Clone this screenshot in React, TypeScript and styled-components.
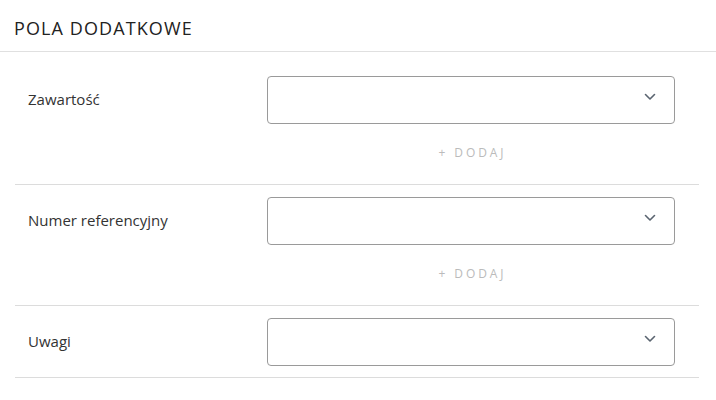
import React from "react";
import styled, { createGlobalStyle } from "styled-components";

const Global = createGlobalStyle`
  html, body { margin: 0; padding: 0; background: #fff; }
  body { font-family: "Open Sans", "Noto Sans", sans-serif; color: #333; }
  * { box-sizing: border-box; }
`;

const Page = styled.div`
  width: 716px;
`;

const Header = styled.div`
  height: 52px;
  padding: 0 14px;
  display: flex;
  align-items: center;
  border-bottom: 1px solid #e0e0e0;
`;

const Title = styled.h2`
  margin: 0;
  font-size: 18px;
  font-weight: 500;
  letter-spacing: 1.1px;
  color: #222;
  padding-top: 5px;
`;

const List = styled.div`
  margin: 0 17px 0 15px;
  padding-top: 12px;
`;

const Row = styled.div`
  display: grid;
  grid-template-columns: 239px 408px;
  align-items: start;
  padding: 12px 0 11px 13px;
  border-bottom: 1px solid #dcdcdc;
`;

const Label = styled.div`
  font-size: 15px;
  color: #333;
  height: 48px;
  padding-bottom: 2px;
  display: flex;
  align-items: center;
`;

const Field = styled.div`
  display: flex;
  flex-direction: column;
`;

const Select = styled.div`
  height: 48px;
  border: 1px solid #9a9a9a;
  border-radius: 4px;
  display: flex;
  align-items: center;
  justify-content: flex-end;
  padding-right: 18px;
  padding-bottom: 6px;
`;

const AddButton = styled.button`
  margin: 10px auto 3px;
  height: 36px;
  border: none;
  background: none;
  font-family: "Open Sans", "Noto Sans", sans-serif;
  font-size: 12px;
  letter-spacing: 2.9px;
  color: #bbbbbb;
  cursor: pointer;
  padding: 0 0 0 3px;
`;

const Chevron = () => (
  <svg width="12" height="8" viewBox="0 0 12 8" fill="none">
    <path d="M1.5 1.5 L6 6 L10.5 1.5" stroke="#5a6470" strokeWidth="1.6" strokeLinecap="round" strokeLinejoin="round" />
  </svg>
);

const fields = [
  { label: "Zawartość", add: true },
  { label: "Numer referencyjny", add: true },
  { label: "Uwagi", add: false },
];

export default function App() {
  return (
    <Page>
      <Global />
      <Header>
        <Title>POLA DODATKOWE</Title>
      </Header>
      <List>
        {fields.map((f) => (
          <Row key={f.label}>
            <Label>{f.label}</Label>
            <Field>
              <Select>
                <Chevron />
              </Select>
              {f.add && <AddButton>+ DODAJ</AddButton>}
            </Field>
          </Row>
        ))}
      </List>
    </Page>
  );
}
